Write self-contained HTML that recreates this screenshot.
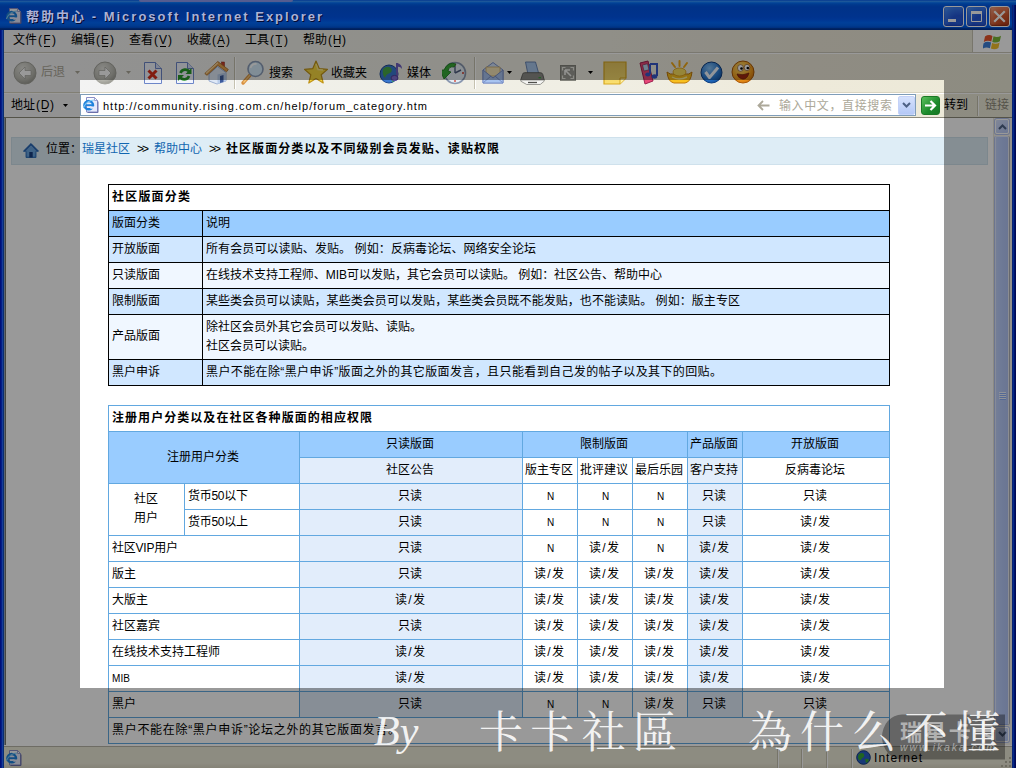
<!DOCTYPE html>
<html lang="zh-CN"><head><meta charset="utf-8"><title>帮助中心 - Microsoft Internet Explorer</title>
<style>
html,body{margin:0;padding:0}
body{width:1016px;height:768px;overflow:hidden;position:relative;background:#ece9d8;font-family:"Liberation Sans",sans-serif;font-size:12px;line-height:12px}
svg.t{display:block;overflow:visible}
svg.t text{font-family:"Liberation Sans","Noto Sans CJK SC",sans-serif;font-size:12px}
.a{position:absolute}
div.a{box-sizing:border-box}
#titlebar{left:0;top:0;width:1016px;height:30px;background:linear-gradient(to bottom,#0058ee 0%,#3593ff 4%,#288eff 6%,#127dff 8%,#036ffc 10%,#0262ee 14%,#0057e5 20%,#0054e3 24%,#0055eb 56%,#005bf5 66%,#026afe 76%,#0062ef 86%,#0052d6 92%,#0040ab 94%,#003092 100%)}
.wb{top:6px;width:21px;height:21px;border:1px solid #fff;border-radius:3px;background:radial-gradient(circle at 75% 85%,#2a5fd8 0%,#2457d8 35%,#3c7ff0 75%,#5a9cfa 100%);box-shadow:inset 0 -1px 2px #1b3fb8}
.wb.close{background:radial-gradient(circle at 80% 90%,#b8401c 0%,#d2562c 40%,#ea8460 75%,#f4ac8e 100%);box-shadow:inset 0 -1px 2px #8a2810}
#lborder{left:0;top:30px;width:4px;height:738px;background:linear-gradient(to right,#0019c8 0,#0019c8 1px,#0832e1 1px,#0832e1 2px,#2564ff 2px,#2564ff 3px,#114bbe 3px)}
#rborder{left:1012px;top:5px;width:4px;height:763px;background:linear-gradient(to right,#103abf 0,#103abf 1px,#0843e1 1px,#0843e1 2px,#0021af 2px,#0021af 3px,#00108d 3px)}
#menubar{left:4px;top:30px;width:1008px;height:23px;background:linear-gradient(to right,#f4f4f6 0,#f0f0e9 30%,#f0eee3 60%,#eeeada 80%,#ece9d8 100%);border-bottom:1px solid #cbc8bb}
#flag{left:972px;top:30px;width:39px;height:22px;background:#fff;border-left:1px solid #c8c5b5}
#toolbar{left:4px;top:53px;width:1008px;height:40px;background:linear-gradient(to right,#f4f4f6 0,#f0f0e9 30%,#f0eee3 60%,#eeeada 80%,#ece9d8 100%);border-top:1px solid #fff;border-bottom:1px solid #d8d4c2}
#addrbar{left:4px;top:93px;width:1008px;height:25px;background:linear-gradient(to right,#f4f4f6 0,#f0f0e9 30%,#f0eee3 60%,#eeeada 80%,#ece9d8 100%);border-top:1px solid #fff}
#addrbox{left:80px;top:94px;width:836px;height:22px;background:#fff;border:1px solid #7f9db9}
.sep{width:2px;border-left:1px solid #c5c2b0;border-right:1px solid #fff;height:32px}
#view{left:6px;top:118px;width:987px;height:627px;background:#fff;overflow:hidden}
#vb1{left:4px;top:117px;width:1008px;height:1px;background:#8d8a7b}
#vb2{left:4px;top:118px;width:1px;height:627px;background:#96a7be}
#vb3{left:5px;top:118px;width:1px;height:627px;background:#75756c}
#crumb{left:5px;top:19px;width:977px;height:28px;background:#deedf6;border:1px solid #cfe1ec}
#sbar{left:993px;top:118px;width:19px;height:627px;background:#f3f1ea;border-left:1px solid #e8e6dd}
#sthumb{left:995px;top:136px;width:14px;height:589px;background:linear-gradient(to right,#c2d2fb 0,#b7cbfa 45%,#b2c4f4 100%);border:1px solid #dfe8fd;border-right-color:#e8ecf4;border-bottom-color:#98aee8;border-radius:2px;box-shadow:1px 0 0 #a8acb4,-1px 0 0 #b4c4ee}
.sbtn{left:995px;width:14px;height:15px;background:linear-gradient(135deg,#d6e1fd,#b6c7f5);border:1px solid #fff;border-radius:2px;box-shadow:0 0 0 1px #b4c4ee}
#status{left:4px;top:745px;width:1008px;height:23px;background:linear-gradient(to bottom,#ece9d8 0,#ece9d8 78%,#dedac6 100%);border-top:1px solid #fff;box-shadow:inset 0 1px 0 #b7b4a7}
.ssep{top:749px;width:2px;height:19px;border-left:1px solid #c5c2b0;border-right:1px solid #fff}
table{position:absolute;border-collapse:separate;border-spacing:0;table-layout:fixed;left:102px}
td{box-sizing:border-box;height:26px;padding:6px 0 0 3px;vertical-align:top;overflow:hidden}
table.t1{top:66px;border-top:1px solid #000;border-left:1px solid #000}
table.t1 td{border-right:1px solid #000;border-bottom:1px solid #000}
table.t2{top:287px;border-top:1px solid #62a8e0;border-left:1px solid #62a8e0}
table.t2 td{border-right:1px solid #62a8e0;border-bottom:1px solid #62a8e0;background:#fff}
tr.h td,td.h{background:#9cf}
tr.d td{background:#d0e7ff}
tr.l td{background:#f0f7ff}
table.t2 td.c{background:#e2edfb}
table.t2 tr.h td{background:#9cf}
td svg.t+svg.t{margin-top:7px}
#dim{left:80px;top:80px;width:864px;height:608px;box-shadow:0 0 0 2000px rgba(0,0,0,.4)}
</style></head>
<body>
<div class="a" id="titlebar"></div>
<div class="a" id="lborder"></div><div class="a" id="rborder"></div>
<svg class="a" style="left:6px;top:8px" width="16" height="16" viewBox="0 0 16 16"><path d="M3.500 .500h8l3 3v11.500h-11z" fill="#e6eafc" stroke="#8a8ec6"/><path d="M4 1h7.500v3h-7.500z" fill="#fbfcff"/><path d="M11.500 .500v3h3z" fill="#fff" stroke="#8a8ec6" stroke-width=".800"/><path d="M4.500 15.500h10.500v-11" fill="none" stroke="#6c70aa"/><ellipse cx="5.700" cy="8.200" rx="4.300" ry="4.100" fill="none" stroke="#1f82dc" stroke-width="2.500"/><path d="M1.800 8.200h8" stroke="#1f82dc" stroke-width="1.900"/><path d="M7.300 10.600h4" stroke="#e6eafc" stroke-width="2.300"/><path d="M.300 11q3.500-8 11-8" fill="none" stroke="#7cc8f6" stroke-width="1.100"/></svg>
<div class="a" style="left:139px;top:0;width:154px;height:2px;background:#8e9af0;border-radius:0 0 5px 5px"></div>
<svg class="t a" width="296" height="13" fill="#040a32" style="left:27px;top:11px;z-index:5"><text x="0" y="11" textLength="296" style="font-size:13px;font-weight:bold">帮助中心 - Microsoft Internet Explorer</text></svg>
<svg class="t a" width="296" height="13" fill="#acb2d6" style="left:26px;top:10px;z-index:5"><text x="0" y="11" textLength="296" style="font-size:13px;font-weight:bold">帮助中心 - Microsoft Internet Explorer</text></svg>
<div class="a wb" style="left:943px"></div><div class="a wb" style="left:966px"></div><div class="a wb close" style="left:989px"></div>
<svg class="a" style="left:943px;top:6px" width="21" height="21" viewBox="0 0 21 21"><rect x="5" y="13" width="8" height="3" fill="#fff"/></svg>
<svg class="a" style="left:966px;top:6px" width="21" height="21" viewBox="0 0 21 21"><path d="M5.5 6.5h10v9h-10z" fill="none" stroke="#fff" stroke-width="1"/><rect x="5" y="5" width="11" height="3" fill="#fff"/></svg>
<svg class="a" style="left:989px;top:6px" width="21" height="21" viewBox="0 0 21 21"><path d="M6 6l9 9M15 6l-9 9" stroke="#fff" stroke-width="2.2" stroke-linecap="square"/></svg>
<div class="a" id="menubar"></div>
<svg class="t a" width="24" height="12" fill="#000" style="left:13px;top:34px;"><text x="0" y="10" textLength="24">文件</text></svg>
<svg class="t a" width="18" height="12" fill="#000" style="left:38px;top:34px;"><text x="0" y="10" textLength="18">(F)</text></svg>
<div class="a" style="left:44px;top:46px;width:6px;height:1px;background:#000"></div>
<svg class="t a" width="24" height="12" fill="#000" style="left:71px;top:34px;"><text x="0" y="10" textLength="24">编辑</text></svg>
<svg class="t a" width="18" height="12" fill="#000" style="left:96px;top:34px;"><text x="0" y="10" textLength="18">(E)</text></svg>
<div class="a" style="left:102px;top:46px;width:6px;height:1px;background:#000"></div>
<svg class="t a" width="24" height="12" fill="#000" style="left:129px;top:34px;"><text x="0" y="10" textLength="24">查看</text></svg>
<svg class="t a" width="18" height="12" fill="#000" style="left:154px;top:34px;"><text x="0" y="10" textLength="18">(V)</text></svg>
<div class="a" style="left:160px;top:46px;width:6px;height:1px;background:#000"></div>
<svg class="t a" width="24" height="12" fill="#000" style="left:187px;top:34px;"><text x="0" y="10" textLength="24">收藏</text></svg>
<svg class="t a" width="18" height="12" fill="#000" style="left:212px;top:34px;"><text x="0" y="10" textLength="18">(A)</text></svg>
<div class="a" style="left:218px;top:46px;width:6px;height:1px;background:#000"></div>
<svg class="t a" width="24" height="12" fill="#000" style="left:245px;top:34px;"><text x="0" y="10" textLength="24">工具</text></svg>
<svg class="t a" width="18" height="12" fill="#000" style="left:270px;top:34px;"><text x="0" y="10" textLength="18">(T)</text></svg>
<div class="a" style="left:276px;top:46px;width:6px;height:1px;background:#000"></div>
<svg class="t a" width="24" height="12" fill="#000" style="left:303px;top:34px;"><text x="0" y="10" textLength="24">帮助</text></svg>
<svg class="t a" width="18" height="12" fill="#000" style="left:328px;top:34px;"><text x="0" y="10" textLength="18">(H)</text></svg>
<div class="a" style="left:334px;top:46px;width:6px;height:1px;background:#000"></div>
<div class="a" id="flag"></div>
<svg class="a" style="left:983px;top:33px" width="20" height="18" viewBox="0 0 20 18"><path d="M2 3.5q3.5-2.5 7.5-.6l-1.2 5.6q-4-1.9-7.5.6z" fill="#e8542c"/><path d="M10.5 3.3q4 1.7 7.5-.6l-1.2 5.6q-3.5 2.3-7.5.6z" fill="#7cb838"/><path d="M.6 10.2q3.5-2.5 7.5-.6l-1.2 5.6q-4-1.9-7.5.6z" fill="#3c7fd8"/><path d="M9.1 10q4 1.7 7.5-.6l-1.2 5.6q-3.5 2.3-7.5.6z" fill="#f4c02c"/></svg>
<div class="a" id="toolbar"></div>
<svg class="a" style="left:13px;top:61px" width="24" height="24" viewBox="-12 -12 24 24"><defs><radialGradient id="gb25" cx=".4" cy=".3" r=".8"><stop offset="0" stop-color="#e4e4de"/><stop offset=".6" stop-color="#bdbdb5"/><stop offset="1" stop-color="#8e8e86"/></radialGradient></defs><circle r="11" fill="url(#gb25)" stroke="#a4a49c" stroke-width="1"/><path d="M-6 0l6-6v3.5h6v5h-6v3.5z" fill="#fff" stroke="#9a9a94" stroke-width=".6"/></svg>
<svg class="t a" width="24" height="12" fill="#aca899" style="left:41px;top:66px;"><text x="0" y="10" textLength="24">后退</text></svg>
<svg class="a" style="left:75px;top:71px" width="5" height="3" viewBox="0 0 5 3"><path d="M0 0h5l-2.5 3z" fill="#aca899"/></svg>
<svg class="a" style="left:93px;top:61px" width="24" height="24" viewBox="-12 -12 24 24"><defs><radialGradient id="gb105" cx=".4" cy=".3" r=".8"><stop offset="0" stop-color="#e4e4de"/><stop offset=".6" stop-color="#bdbdb5"/><stop offset="1" stop-color="#8e8e86"/></radialGradient></defs><circle r="11" fill="url(#gb105)" stroke="#a4a49c" stroke-width="1"/><g transform="scale(-1,1)"><path d="M-6 0l6-6v3.5h6v5h-6v3.5z" fill="#fff" stroke="#9a9a94" stroke-width=".6"/></g></svg>
<svg class="a" style="left:126px;top:71px" width="5" height="3" viewBox="0 0 5 3"><path d="M0 0h5l-2.5 3z" fill="#aca899"/></svg>
<svg class="a" style="left:143px;top:61px" width="20" height="24" viewBox="0 0 20 24"><path d="M1.5 1.5h11l6 6v15h-17z" fill="#f2f5fd" stroke="#6d86c8"/><path d="M12.5 1.5v6h6" fill="#d4dcf4" stroke="#6d86c8"/><path d="M5.5 9.5l8 8M13.5 9.5l-8 8" stroke="#d8301c" stroke-width="3"/></svg>
<svg class="a" style="left:175px;top:61px" width="20" height="24" viewBox="0 0 20 24"><path d="M1.5 1.5h11l6 6v15h-17z" fill="#f2f5fd" stroke="#6d86c8"/><path d="M12.5 1.5v6h6" fill="#d4dcf4" stroke="#6d86c8"/><path d="M14.5 11a5 5 0 0 0-9 1" fill="none" stroke="#2a9a2a" stroke-width="2.6"/><path d="M16.5 7v6h-6z" fill="#2a9a2a"/><path d="M5 16a5 5 0 0 0 9-1" fill="none" stroke="#2a9a2a" stroke-width="2.6"/><path d="M3 20v-6h6z" fill="#2a9a2a"/></svg>
<svg class="a" style="left:204px;top:60px" width="25" height="25" viewBox="0 0 25 25"><path d="M5 14l8.500-7.500l8.500 6v8.500l-9 3l-8-3z" fill="#dfe9f7" stroke="#8aa0c8" stroke-width=".800"/><path d="M13.500 24v-9.500l8.500-2v8.500z" fill="#b9cdea"/><path d="M16 23v-7l3.500-1v7z" fill="#3c5a9c"/><rect x="17.500" y="2" width="3" height="5" fill="#c8402c" stroke="#8a2818" stroke-width=".500"/><path d="M.800 13.500l13-12l10.500 8l-1.800 2.300l-8.700-6.500l-10.800 10z" fill="#e6a24e" stroke="#a86a24" stroke-width=".800"/><path d="M2 13.500l11.800-10.700" stroke="#f8d9a0" stroke-width="1.200"/></svg>
<div class="a sep" style="left:234px;top:57px"></div>
<svg class="a" style="left:240px;top:60px" width="25" height="26" viewBox="0 0 25 26"><path d="M3 23l8-9" stroke="#d89040" stroke-width="3.4" stroke-linecap="round"/><path d="M3.500 22.500l7-8" stroke="#f4c878" stroke-width="1.200"/><circle cx="15.500" cy="9" r="7.500" fill="#d6ecfa" stroke="#8a9cb8" stroke-width="1.600"/><path d="M10.500 8a5 5 0 0 1 6-4" fill="none" stroke="#fff" stroke-width="1.800"/></svg>
<svg class="t a" width="24" height="12" fill="#000" style="left:269px;top:67px;"><text x="0" y="10" textLength="24">搜索</text></svg>
<svg class="a" style="left:304px;top:60px" width="24" height="24" viewBox="0 0 24 24"><path d="M12 1l3.300 7.700 8.200.700-6.300 5.400 2 8.200-7.200-4.400-7.200 4.400 2-8.200-6.300-5.400 8.200-.700z" fill="#f9d940" stroke="#c09418" stroke-width="1.200" stroke-linejoin="round"/><path d="M12 4l2 5.500 5 .5" fill="none" stroke="#fbe88a" stroke-width="1.400"/></svg>
<svg class="t a" width="36" height="12" fill="#000" style="left:331px;top:67px;"><text x="0" y="10" textLength="36">收藏夹</text></svg>
<svg class="a" style="left:379px;top:60px" width="25" height="25" viewBox="0 0 25 25"><circle cx="10" cy="14" r="9" fill="#3a78d0" stroke="#1c4890"/><path d="M4 9q4-4 8-1q2 3-1 5q-4 1-5 5q-3-3-2-9z" fill="#48a848"/><path d="M12 17q3-2 6 0q-1 4-5 5z" fill="#48a848"/><path d="M18 3v14" stroke="#7060c0" stroke-width="2"/><path d="M18 3q5 1 5 6q-2-3-5-2z" fill="#7060c0"/><ellipse cx="15.500" cy="18" rx="3.500" ry="2.600" fill="#8070d0" stroke="#5040a0"/></svg>
<svg class="t a" width="24" height="12" fill="#000" style="left:407px;top:67px;"><text x="0" y="10" textLength="24">媒体</text></svg>
<svg class="a" style="left:442px;top:60px" width="25" height="25" viewBox="0 0 25 25"><circle cx="13" cy="13" r="10.500" fill="#e6eef6" stroke="#8a98b0" stroke-width="1.600"/><path d="M13 13v-7M13 13l6-3" stroke="#506080" stroke-width="1.400"/><path d="M13 4v2M13 20v2M4 13h2M20 13h2" stroke="#d04030" stroke-width="1.300"/><path d="M2 10q4-9 12-6l-2 3q-5-1-6 4l3 1l-7 7l-4-9z" fill="#38a838" stroke="#1c781c" stroke-width=".8"/></svg>
<div class="a sep" style="left:474px;top:57px"></div>
<svg class="a" style="left:481px;top:61px" width="24" height="24" viewBox="0 0 24 24"><path d="M2 9l10-7.500l10 7.500v13h-20z" fill="#cfe0f8" stroke="#7a90c8"/><path d="M5 6h14v9h-14z" fill="#f6e4b8" stroke="#c8a868" stroke-width=".8"/><path d="M2 9l10 8l10-8v13h-20z" fill="#a8c4f0" stroke="#7a90c8"/><path d="M2 22l8-7M22 22l-8-7" stroke="#7a90c8" fill="none"/></svg>
<svg class="a" style="left:507px;top:71px" width="5" height="3" viewBox="0 0 5 3"><path d="M0 0h5l-2.500 3z" fill="#000"/></svg>
<svg class="a" style="left:520px;top:61px" width="25" height="24" viewBox="0 0 25 24"><path d="M5.500 1h10l3.500 12.500h-11z" fill="#a9c6ec" stroke="#5f7cac" stroke-width=".900"/><path d="M2.500 13.500q.200-1.800 2.200-1.800h15.600q2 0 2.500 1.800l1.400 5.500h-23.400z" fill="#8c8c88" stroke="#5a5a56" stroke-width=".900"/><path d="M.800 19h23.400v1.200l-4 3.300h-13.500l-5.900-3.300z" fill="#f4f4f2" stroke="#8e8e8a" stroke-width=".900"/><path d="M8 21.500h9" stroke="#50504c" stroke-width="1.300"/><rect x="18.500" y="16" width="2.500" height="1.300" fill="#40a040"/></svg>
<svg class="a" style="left:560px;top:65px" width="16" height="16" viewBox="0 0 16 16"><rect x=".500" y=".500" width="15" height="15" fill="#9c9c94" stroke="#84847c"/><path d="M2.500 5.500v-3h3M10.500 2.500h3v3M13.500 10.500v3h-3M5.500 13.500h-3v-3" fill="none" stroke="#e8e8e0" stroke-width="1.200"/><path d="M5 5h5M5 5v5M5 5l6 6" stroke="#f4f4f0" stroke-width="1.600" fill="none"/></svg>
<svg class="a" style="left:588px;top:71px" width="5" height="3" viewBox="0 0 5 3"><path d="M0 0h5l-2.500 3z" fill="#000"/></svg>
<svg class="a" style="left:603px;top:61px" width="24" height="24" viewBox="0 0 24 24"><defs><linearGradient id="ng" x1="0" y1="0" x2="0" y2="1"><stop offset="0" stop-color="#e8c860"/><stop offset="1" stop-color="#fbe070"/></linearGradient></defs><path d="M1 1h22v16l-6 6h-16z" fill="url(#ng)" stroke="#d8a820" stroke-width="1.200"/><path d="M23 17h-6v6" fill="#fdf0a8" stroke="#d8a820"/></svg>
<svg class="a" style="left:636px;top:60px" width="22" height="26" viewBox="0 0 22 26"><path d="M4 3l8-2l5 20l-8 3z" fill="#e84878" stroke="#a02050"/><path d="M6.500 5l5-1.200l1.500 6l-5 1.200z" fill="#b8d8f0" stroke="#80264c" stroke-width=".600"/><path d="M14 4h7v12" fill="none" stroke="#3858c8" stroke-width="2"/><ellipse cx="18.500" cy="16.500" rx="2.800" ry="2.200" fill="#3858c8"/><path d="M14 4v10" stroke="#3858c8" stroke-width="2"/><ellipse cx="11.800" cy="14.500" rx="2.600" ry="2" fill="#3858c8"/></svg>
<svg class="a" style="left:666px;top:59px" width="27" height="27" viewBox="0 0 27 27"><path d="M1 13q3 3 7 2q5.500-4 11 0q4 1 7-2q-1 10-7 11h-11q-6-1-7-11z" fill="#f8c020" stroke="#c07808"/><ellipse cx="13.500" cy="13" rx="6.500" ry="4" fill="#fbe060" stroke="#d89818" stroke-width=".800"/><path d="M13.500 2v5M6 4l3 4M21 4l-3 4" stroke="#f0a818" stroke-width="2" stroke-linecap="round"/><path d="M6 18q7 4 15 0" fill="none" stroke="#fdf0a0" stroke-width="1.400"/></svg>
<svg class="a" style="left:700px;top:61px" width="23" height="23" viewBox="0 0 23 23"><defs><radialGradient id="bc" cx=".4" cy=".3" r=".8"><stop offset="0" stop-color="#8ac4f8"/><stop offset=".6" stop-color="#2878d0"/><stop offset="1" stop-color="#104890"/></radialGradient></defs><circle cx="11.500" cy="11.500" r="10.500" fill="url(#bc)" stroke="#0c3c80"/><path d="M5.500 11l4 5.500l8.500-10" fill="none" stroke="#f4f8ff" stroke-width="3" stroke-linejoin="round"/></svg>
<svg class="a" style="left:731px;top:60px" width="24" height="24" viewBox="0 0 24 24"><defs><radialGradient id="sm" cx=".4" cy=".3" r=".8"><stop offset="0" stop-color="#fde070"/><stop offset=".6" stop-color="#f4a020"/><stop offset="1" stop-color="#c86808"/></radialGradient></defs><circle cx="12" cy="12" r="11" fill="url(#sm)" stroke="#a85808"/><ellipse cx="9.500" cy="8" rx="3" ry="3.400" fill="#fff" stroke="#804008" stroke-width=".600"/><ellipse cx="16" cy="7.500" rx="2.800" ry="3.200" fill="#fff" stroke="#804008" stroke-width=".600"/><circle cx="10.500" cy="8.500" r="1.300"/><circle cx="16.800" cy="8" r="1.300"/><path d="M6 14q6 2 12-1q-2 7-7 6q-4-1-5-5z" fill="#a02810" stroke="#702008" stroke-width=".700"/></svg>
<div class="a" id="addrbar"></div>
<svg class="t a" width="24" height="12" fill="#000" style="left:11px;top:99px;"><text x="0" y="10" textLength="24">地址</text></svg>
<svg class="t a" width="18" height="12" fill="#000" style="left:36px;top:99px;"><text x="0" y="10" textLength="18">(D)</text></svg>
<div class="a" style="left:42px;top:111px;width:6px;height:1px;background:#000"></div>
<svg class="a" style="left:63px;top:104px" width="5" height="3" viewBox="0 0 5 3"><path d="M0 0h5l-2.500 3z" fill="#000"/></svg>
<div class="a" id="addrbox"></div>
<svg class="a" style="left:83px;top:97px" width="16" height="16" viewBox="0 0 16 16"><path d="M3.500 .500h8l3 3v11.500h-11z" fill="#e6eafc" stroke="#8a8ec6"/><path d="M4 1h7.500v3h-7.500z" fill="#fbfcff"/><path d="M11.500 .500v3h3z" fill="#fff" stroke="#8a8ec6" stroke-width=".800"/><path d="M4.500 15.500h10.500v-11" fill="none" stroke="#6c70aa"/><ellipse cx="5.700" cy="8.200" rx="4.300" ry="4.100" fill="none" stroke="#1f82dc" stroke-width="2.500"/><path d="M1.800 8.200h8" stroke="#1f82dc" stroke-width="1.900"/><path d="M7.300 10.600h4" stroke="#e6eafc" stroke-width="2.300"/><path d="M.300 11q3.500-8 11-8" fill="none" stroke="#7cc8f6" stroke-width="1.100"/></svg>
<svg class="t a" width="324" height="12" fill="#000" style="left:103px;top:100px;"><text x="0" y="10" textLength="324" style="font-size:11px">http://community.rising.com.cn/help/forum_category.htm</text></svg>
<svg class="a" style="left:757px;top:100px" width="13" height="11" viewBox="0 0 13 11"><path d="M6 1l-4.500 4.500l4.500 4.500M1.500 5.500h11" fill="none" stroke="#aca899" stroke-width="1.800"/></svg>
<svg class="t a" width="113" height="12" fill="#aca899" style="left:779px;top:100px;"><text x="0" y="10" textLength="113">输入中文，直接搜索</text></svg>
<div class="a" style="left:898px;top:96px;width:17px;height:19px;background:linear-gradient(to bottom,#d6e2fd,#b4c8f6);border:1px solid #c4d2f8;border-radius:2px"></div>
<svg class="a" style="left:902px;top:102px" width="9" height="7" viewBox="0 0 9 7"><path d="M1 1l3.500 3.500l3.500-3.500" fill="none" stroke="#4d6185" stroke-width="2"/></svg>
<div class="a" style="left:921px;top:96px;width:19px;height:19px;background:linear-gradient(135deg,#5cc05c,#1c8a2c 60%,#167824);border:1px solid #1a7a26;border-radius:3px"></div>
<svg class="a" style="left:924px;top:99px" width="13" height="13" viewBox="0 0 13 13"><path d="M1 6.500h10M6.500 2l4.500 4.500l-4.500 4.500" fill="none" stroke="#fff" stroke-width="2.200"/></svg>
<svg class="t a" width="24" height="12" fill="#000" style="left:944px;top:99px;"><text x="0" y="10" textLength="24">转到</text></svg>
<div class="a sep" style="left:977px;top:96px;height:20px"></div>
<svg class="t a" width="24" height="12" fill="#8c897a" style="left:985px;top:99px;"><text x="0" y="10" textLength="24">链接</text></svg>
<div class="a" id="vb1"></div><div class="a" id="vb2"></div><div class="a" id="vb3"></div>
<div class="a" id="sbar"></div><div class="a" id="sthumb"></div>
<div class="a sbtn" style="top:119px"></div><div class="a sbtn" style="top:727px"></div>
<svg class="a" style="left:998px;top:123px" width="9" height="7" viewBox="0 0 9 7"><path d="M1 6l3.500-3.500l3.500 3.500" fill="none" stroke="#4d6185" stroke-width="2"/></svg>
<svg class="a" style="left:998px;top:731px" width="9" height="7" viewBox="0 0 9 7"><path d="M1 1l3.500 3.500l3.500-3.500" fill="none" stroke="#4d6185" stroke-width="2"/></svg>
<svg class="a" style="left:999px;top:392px" width="7" height="8" viewBox="0 0 7 8"><path d="M0 .500h7M0 2.500h7M0 4.500h7M0 6.500h7" stroke="#eef4fe"/><path d="M1 1.500h7M1 3.500h7M1 5.500h7M1 7.500h7" stroke="#8cb0f8"/></svg>
<div class="a" id="status"></div>
<svg class="a" style="left:6px;top:750px" width="16" height="16" viewBox="0 0 16 16"><path d="M3.500 .500h8l3 3v11.500h-11z" fill="#e6eafc" stroke="#8a8ec6"/><path d="M4 1h7.500v3h-7.500z" fill="#fbfcff"/><path d="M11.500 .500v3h3z" fill="#fff" stroke="#8a8ec6" stroke-width=".800"/><path d="M4.500 15.500h10.500v-11" fill="none" stroke="#6c70aa"/><ellipse cx="5.700" cy="8.200" rx="4.300" ry="4.100" fill="none" stroke="#1f82dc" stroke-width="2.500"/><path d="M1.800 8.200h8" stroke="#1f82dc" stroke-width="1.900"/><path d="M7.300 10.600h4" stroke="#e6eafc" stroke-width="2.300"/><path d="M.300 11q3.500-8 11-8" fill="none" stroke="#7cc8f6" stroke-width="1.100"/></svg>
<div class="a ssep" style="left:777px"></div>
<div class="a ssep" style="left:801px"></div>
<div class="a ssep" style="left:826px"></div>
<div class="a ssep" style="left:851px"></div>
<svg class="a" style="left:856px;top:750px" width="15" height="15" viewBox="0 0 15 15"><circle cx="7.500" cy="7.500" r="6.800" fill="#2860c8" stroke="#103880"/><path d="M3 4q3-2 5 0q1 3-2 4q-1 3-3 2q-2-3 0-6zM9 9q3-1 4 1q-1 3-3 3z" fill="#38a838"/></svg>
<svg class="t a" width="48" height="12" fill="#000" style="left:874px;top:752px;"><text x="0" y="10" textLength="48">Internet</text></svg>
<svg class="a" style="left:999px;top:755px" width="12" height="12" viewBox="0 0 12 12"><path d="M10 2h2v2h-2zM6 6h2v2h-2zM10 6h2v2h-2zM2 10h2v2h-2zM6 10h2v2h-2zM10 10h2v2h-2z" fill="#b8b4a2"/></svg>
<div class="a" id="view"><div class="a" id="crumb"></div>
<svg class="a" style="left:17px;top:25px" width="16" height="15" viewBox="0 0 16 15"><defs><linearGradient id="hg" x1="0" y1="0" x2="0" y2="1"><stop offset="0" stop-color="#8fc0ee"/><stop offset="1" stop-color="#3f7fc8"/></linearGradient></defs><path d="M8 .600l7.600 7.600h-2.600v6.300h-10v-6.300h-2.600z" fill="url(#hg)" stroke="#2f6fb8" stroke-width=".900"/><path d="M8 3.400l3.800 3.800v6.300h-7.600v-6.300z" fill="#6aa6e0"/><rect x="6.300" y="9" width="3.400" height="5.500" fill="#163f80"/><path d="M1.200 8.200l6.800-6.800l6.800 6.800" fill="none" stroke="#2a66b4" stroke-width="1.500"/></svg>
<svg class="t a" width="36" height="12" fill="#000" style="left:40px;top:25px"><text x="0" y="10" textLength="36">位置：</text></svg>
<svg class="t a" width="48" height="12" fill="#1166b0" style="left:76px;top:25px"><text x="0" y="10" textLength="48">瑞星社区</text></svg>
<svg class="t a" width="12" height="12" fill="#000" style="left:131px;top:25px"><text x="0" y="10" textLength="12">&gt;&gt;</text></svg>
<svg class="t a" width="48" height="12" fill="#1166b0" style="left:148px;top:25px"><text x="0" y="10" textLength="48">帮助中心</text></svg>
<svg class="t a" width="12" height="12" fill="#000" style="left:203px;top:25px"><text x="0" y="10" textLength="12">&gt;&gt;</text></svg>
<svg class="t a" width="273" height="12" fill="#000" style="left:220px;top:25px"><text x="0" y="10" textLength="273" font-weight="bold">社区版面分类以及不同级别会员发贴、读贴权限</text></svg>
<table class="t1"><colgroup><col style="width:94px"><col style="width:687px"></colgroup><tr><td colspan="2" style="background:#fff"><svg class="t " width="78" height="12" fill="#000"><text x="0" y="10" textLength="78" font-weight="bold">社区版面分类</text></svg></td></tr><tr class="h"><td><svg class="t " width="48" height="12" fill="#000"><text x="0" y="10" textLength="48">版面分类</text></svg></td><td><svg class="t " width="24" height="12" fill="#000"><text x="0" y="10" textLength="24">说明</text></svg></td></tr><tr class="d"><td><svg class="t " width="48" height="12" fill="#000"><text x="0" y="10" textLength="48">开放版面</text></svg></td><td><svg class="t " width="330" height="12" fill="#000"><text x="0" y="10" textLength="330" xml:space="preserve">所有会员可以读贴、发贴。 例如：反病毒论坛、网络安全论坛</text></svg></td></tr><tr class="l"><td><svg class="t " width="48" height="12" fill="#000"><text x="0" y="10" textLength="48">只读版面</text></svg></td><td><svg class="t " width="456" height="12" fill="#000"><text x="0" y="10" textLength="456" xml:space="preserve">在线技术支持工程师、MIB可以发贴，其它会员可以读贴。 例如：社区公告、帮助中心</text></svg></td></tr><tr class="d"><td><svg class="t " width="48" height="12" fill="#000"><text x="0" y="10" textLength="48">限制版面</text></svg></td><td><svg class="t " width="534" height="12" fill="#000"><text x="0" y="10" textLength="534" xml:space="preserve">某些类会员可以读贴，某些类会员可以发贴，某些类会员既不能发贴，也不能读贴。 例如：版主专区</text></svg></td></tr><tr class="l"><td style="height:45px;padding-top:15px"><svg class="t " width="48" height="12" fill="#000"><text x="0" y="10" textLength="48">产品版面</text></svg></td><td style="height:45px"><svg class="t " width="216" height="12" fill="#000"><text x="0" y="10" textLength="216">除社区会员外其它会员可以发贴、读贴。</text></svg><svg class="t " width="108" height="12" fill="#000"><text x="0" y="10" textLength="108">社区会员可以读贴。</text></svg></td></tr><tr class="d"><td><svg class="t " width="48" height="12" fill="#000"><text x="0" y="10" textLength="48">黑户申诉</text></svg></td><td><svg class="t " width="516" height="12" fill="#000"><text x="0" y="10" textLength="516">黑户不能在除“黑户申诉”版面之外的其它版面发言，且只能看到自己发的帖子以及其下的回贴。</text></svg></td></tr></table>
<table class="t2"><colgroup><col style="width:76px"><col style="width:115px"><col style="width:223px"><col style="width:55px"><col style="width:55px"><col style="width:55px"><col style="width:55px"><col style="width:147px"></colgroup><tr><td colspan="8"><svg class="t " width="260" height="12" fill="#000"><text x="0" y="10" textLength="260" font-weight="bold">注册用户分类以及在社区各种版面的相应权限</text></svg></td></tr><tr class="h"><td colspan="2" rowspan="2" style="padding-left:0;height:52px;padding-top:19px"><svg class="t " width="72" height="12" fill="#000" style="margin-left:58px"><text x="0" y="10" textLength="72">注册用户分类</text></svg></td><td style="padding-left:0;"><svg class="t " width="48" height="12" fill="#000" style="margin-left:86px"><text x="0" y="10" textLength="48">只读版面</text></svg></td><td colspan="3" style="padding-left:0;"><svg class="t " width="48" height="12" fill="#000" style="margin-left:57px"><text x="0" y="10" textLength="48">限制版面</text></svg></td><td style="padding-left:0;"><svg class="t " width="48" height="12" fill="#000" style="margin-left:2px"><text x="0" y="10" textLength="48">产品版面</text></svg></td><td style="padding-left:0;"><svg class="t " width="48" height="12" fill="#000" style="margin-left:48px"><text x="0" y="10" textLength="48">开放版面</text></svg></td></tr><tr><td class="c" style="padding-left:0;"><svg class="t " width="48" height="12" fill="#000" style="margin-left:86px"><text x="0" y="10" textLength="48">社区公告</text></svg></td><td style="padding-left:0;"><svg class="t " width="48" height="12" fill="#000" style="margin-left:2px"><text x="0" y="10" textLength="48">版主专区</text></svg></td><td style="padding-left:0;"><svg class="t " width="48" height="12" fill="#000" style="margin-left:2px"><text x="0" y="10" textLength="48">批评建议</text></svg></td><td style="padding-left:0;"><svg class="t " width="48" height="12" fill="#000" style="margin-left:2px"><text x="0" y="10" textLength="48">最后乐园</text></svg></td><td class="c" style="padding-left:0;"><svg class="t " width="48" height="12" fill="#000" style="margin-left:2px"><text x="0" y="10" textLength="48">客户支持</text></svg></td><td style="padding-left:0;"><svg class="t " width="60" height="12" fill="#000" style="margin-left:42px"><text x="0" y="10" textLength="60">反病毒论坛</text></svg></td></tr><tr><td rowspan="2" style="padding-left:0;height:52px;padding-top:9px"><svg class="t " width="24" height="12" fill="#000" style="margin-left:25px"><text x="0" y="10" textLength="24">社区</text></svg><svg class="t " width="24" height="12" fill="#000" style="margin-left:25px"><text x="0" y="10" textLength="24">用户</text></svg></td><td><svg class="t " width="60" height="12" fill="#000"><text x="0" y="10" textLength="60">货币50以下</text></svg></td><td class="c" style="padding-left:0;"><svg class="t " width="24" height="12" fill="#000" style="margin-left:98px"><text x="0" y="10" textLength="24">只读</text></svg></td><td style="padding-left:0;"><svg class="t " width="6" height="12" fill="#000" style="margin-left:24px"><text x="0" y="10" style="font-size:10px">N</text></svg></td><td style="padding-left:0;"><svg class="t " width="6" height="12" fill="#000" style="margin-left:24px"><text x="0" y="10" style="font-size:10px">N</text></svg></td><td style="padding-left:0;"><svg class="t " width="6" height="12" fill="#000" style="margin-left:24px"><text x="0" y="10" style="font-size:10px">N</text></svg></td><td class="c" style="padding-left:0;"><svg class="t " width="24" height="12" fill="#000" style="margin-left:14px"><text x="0" y="10" textLength="24">只读</text></svg></td><td style="padding-left:0;"><svg class="t " width="24" height="12" fill="#000" style="margin-left:60px"><text x="0" y="10" textLength="24">只读</text></svg></td></tr><tr><td><svg class="t " width="60" height="12" fill="#000"><text x="0" y="10" textLength="60">货币50以上</text></svg></td><td class="c" style="padding-left:0;"><svg class="t " width="24" height="12" fill="#000" style="margin-left:98px"><text x="0" y="10" textLength="24">只读</text></svg></td><td style="padding-left:0;"><svg class="t " width="6" height="12" fill="#000" style="margin-left:24px"><text x="0" y="10" style="font-size:10px">N</text></svg></td><td style="padding-left:0;"><svg class="t " width="6" height="12" fill="#000" style="margin-left:24px"><text x="0" y="10" style="font-size:10px">N</text></svg></td><td style="padding-left:0;"><svg class="t " width="6" height="12" fill="#000" style="margin-left:24px"><text x="0" y="10" style="font-size:10px">N</text></svg></td><td class="c" style="padding-left:0;"><svg class="t " width="24" height="12" fill="#000" style="margin-left:14px"><text x="0" y="10" textLength="24">只读</text></svg></td><td style="padding-left:0;"><svg class="t " width="30" height="12" fill="#000" style="margin-left:57px"><text x="0" y="10" textLength="30">读/发</text></svg></td></tr><tr><td colspan="2"><svg class="t " width="66" height="12" fill="#000"><text x="0" y="10" textLength="66">社区VIP用户</text></svg></td><td class="c" style="padding-left:0;"><svg class="t " width="24" height="12" fill="#000" style="margin-left:98px"><text x="0" y="10" textLength="24">只读</text></svg></td><td style="padding-left:0;"><svg class="t " width="6" height="12" fill="#000" style="margin-left:24px"><text x="0" y="10" style="font-size:10px">N</text></svg></td><td style="padding-left:0;"><svg class="t " width="30" height="12" fill="#000" style="margin-left:11px"><text x="0" y="10" textLength="30">读/发</text></svg></td><td style="padding-left:0;"><svg class="t " width="6" height="12" fill="#000" style="margin-left:24px"><text x="0" y="10" style="font-size:10px">N</text></svg></td><td class="c" style="padding-left:0;"><svg class="t " width="30" height="12" fill="#000" style="margin-left:11px"><text x="0" y="10" textLength="30">读/发</text></svg></td><td style="padding-left:0;"><svg class="t " width="30" height="12" fill="#000" style="margin-left:57px"><text x="0" y="10" textLength="30">读/发</text></svg></td></tr><tr><td colspan="2"><svg class="t " width="24" height="12" fill="#000"><text x="0" y="10" textLength="24">版主</text></svg></td><td class="c" style="padding-left:0;"><svg class="t " width="24" height="12" fill="#000" style="margin-left:98px"><text x="0" y="10" textLength="24">只读</text></svg></td><td style="padding-left:0;"><svg class="t " width="30" height="12" fill="#000" style="margin-left:11px"><text x="0" y="10" textLength="30">读/发</text></svg></td><td style="padding-left:0;"><svg class="t " width="30" height="12" fill="#000" style="margin-left:11px"><text x="0" y="10" textLength="30">读/发</text></svg></td><td style="padding-left:0;"><svg class="t " width="30" height="12" fill="#000" style="margin-left:11px"><text x="0" y="10" textLength="30">读/发</text></svg></td><td class="c" style="padding-left:0;"><svg class="t " width="30" height="12" fill="#000" style="margin-left:11px"><text x="0" y="10" textLength="30">读/发</text></svg></td><td style="padding-left:0;"><svg class="t " width="30" height="12" fill="#000" style="margin-left:57px"><text x="0" y="10" textLength="30">读/发</text></svg></td></tr><tr><td colspan="2"><svg class="t " width="36" height="12" fill="#000"><text x="0" y="10" textLength="36">大版主</text></svg></td><td class="c" style="padding-left:0;"><svg class="t " width="30" height="12" fill="#000" style="margin-left:95px"><text x="0" y="10" textLength="30">读/发</text></svg></td><td style="padding-left:0;"><svg class="t " width="30" height="12" fill="#000" style="margin-left:11px"><text x="0" y="10" textLength="30">读/发</text></svg></td><td style="padding-left:0;"><svg class="t " width="30" height="12" fill="#000" style="margin-left:11px"><text x="0" y="10" textLength="30">读/发</text></svg></td><td style="padding-left:0;"><svg class="t " width="30" height="12" fill="#000" style="margin-left:11px"><text x="0" y="10" textLength="30">读/发</text></svg></td><td class="c" style="padding-left:0;"><svg class="t " width="30" height="12" fill="#000" style="margin-left:11px"><text x="0" y="10" textLength="30">读/发</text></svg></td><td style="padding-left:0;"><svg class="t " width="30" height="12" fill="#000" style="margin-left:57px"><text x="0" y="10" textLength="30">读/发</text></svg></td></tr><tr><td colspan="2"><svg class="t " width="48" height="12" fill="#000"><text x="0" y="10" textLength="48">社区嘉宾</text></svg></td><td class="c" style="padding-left:0;"><svg class="t " width="24" height="12" fill="#000" style="margin-left:98px"><text x="0" y="10" textLength="24">只读</text></svg></td><td style="padding-left:0;"><svg class="t " width="30" height="12" fill="#000" style="margin-left:11px"><text x="0" y="10" textLength="30">读/发</text></svg></td><td style="padding-left:0;"><svg class="t " width="30" height="12" fill="#000" style="margin-left:11px"><text x="0" y="10" textLength="30">读/发</text></svg></td><td style="padding-left:0;"><svg class="t " width="30" height="12" fill="#000" style="margin-left:11px"><text x="0" y="10" textLength="30">读/发</text></svg></td><td class="c" style="padding-left:0;"><svg class="t " width="30" height="12" fill="#000" style="margin-left:11px"><text x="0" y="10" textLength="30">读/发</text></svg></td><td style="padding-left:0;"><svg class="t " width="30" height="12" fill="#000" style="margin-left:57px"><text x="0" y="10" textLength="30">读/发</text></svg></td></tr><tr><td colspan="2"><svg class="t " width="108" height="12" fill="#000"><text x="0" y="10" textLength="108">在线技术支持工程师</text></svg></td><td class="c" style="padding-left:0;"><svg class="t " width="30" height="12" fill="#000" style="margin-left:95px"><text x="0" y="10" textLength="30">读/发</text></svg></td><td style="padding-left:0;"><svg class="t " width="30" height="12" fill="#000" style="margin-left:11px"><text x="0" y="10" textLength="30">读/发</text></svg></td><td style="padding-left:0;"><svg class="t " width="30" height="12" fill="#000" style="margin-left:11px"><text x="0" y="10" textLength="30">读/发</text></svg></td><td style="padding-left:0;"><svg class="t " width="30" height="12" fill="#000" style="margin-left:11px"><text x="0" y="10" textLength="30">读/发</text></svg></td><td class="c" style="padding-left:0;"><svg class="t " width="30" height="12" fill="#000" style="margin-left:11px"><text x="0" y="10" textLength="30">读/发</text></svg></td><td style="padding-left:0;"><svg class="t " width="30" height="12" fill="#000" style="margin-left:57px"><text x="0" y="10" textLength="30">读/发</text></svg></td></tr><tr><td colspan="2"><svg class="t " width="18" height="12" fill="#000"><text x="0" y="10" textLength="18" style="font-size:10px">MIB</text></svg></td><td class="c" style="padding-left:0;"><svg class="t " width="30" height="12" fill="#000" style="margin-left:95px"><text x="0" y="10" textLength="30">读/发</text></svg></td><td style="padding-left:0;"><svg class="t " width="30" height="12" fill="#000" style="margin-left:11px"><text x="0" y="10" textLength="30">读/发</text></svg></td><td style="padding-left:0;"><svg class="t " width="30" height="12" fill="#000" style="margin-left:11px"><text x="0" y="10" textLength="30">读/发</text></svg></td><td style="padding-left:0;"><svg class="t " width="30" height="12" fill="#000" style="margin-left:11px"><text x="0" y="10" textLength="30">读/发</text></svg></td><td class="c" style="padding-left:0;"><svg class="t " width="30" height="12" fill="#000" style="margin-left:11px"><text x="0" y="10" textLength="30">读/发</text></svg></td><td style="padding-left:0;"><svg class="t " width="30" height="12" fill="#000" style="margin-left:57px"><text x="0" y="10" textLength="30">读/发</text></svg></td></tr><tr><td colspan="2"><svg class="t " width="24" height="12" fill="#000"><text x="0" y="10" textLength="24">黑户</text></svg></td><td class="c" style="padding-left:0;"><svg class="t " width="24" height="12" fill="#000" style="margin-left:98px"><text x="0" y="10" textLength="24">只读</text></svg></td><td style="padding-left:0;"><svg class="t " width="6" height="12" fill="#000" style="margin-left:24px"><text x="0" y="10" style="font-size:10px">N</text></svg></td><td style="padding-left:0;"><svg class="t " width="6" height="12" fill="#000" style="margin-left:24px"><text x="0" y="10" style="font-size:10px">N</text></svg></td><td style="padding-left:0;"><svg class="t " width="30" height="12" fill="#000" style="margin-left:11px"><text x="0" y="10" textLength="30">读/发</text></svg></td><td class="c" style="padding-left:0;"><svg class="t " width="24" height="12" fill="#000" style="margin-left:14px"><text x="0" y="10" textLength="24">只读</text></svg></td><td style="padding-left:0;"><svg class="t " width="24" height="12" fill="#000" style="margin-left:60px"><text x="0" y="10" textLength="24">只读</text></svg></td></tr><tr><td colspan="8"><svg class="t " width="288" height="12" fill="#000"><text x="0" y="10" textLength="288">黑户不能在除“黑户申诉”论坛之外的其它版面发言。</text></svg></td></tr></table></div>
<div class="a" id="dim"></div>
<svg class="a" style="left:0;top:0" width="1016" height="768" viewBox="0 0 1016 768"><path d="M902 714.500h103v45h-103a20 22.500 0 0 1 0-45z" fill="#000" fill-opacity=".34"/><text x="900" y="740" textLength="95" font-size="22" font-weight="bold" fill="#e4e4e4" fill-opacity=".62" style="font-family:'Liberation Sans','Noto Sans CJK SC',sans-serif">瑞星卡卡</text><text x="900" y="751" textLength="95" font-size="10.500" font-style="italic" fill="#e8e8e8" fill-opacity=".55" style="font-family:'Liberation Sans',sans-serif">www.ikaka.com</text></svg>
<svg class="a" style="left:0;top:0" width="1016" height="768" viewBox="0 0 1016 768"><g fill="#fff" fill-opacity=".9"><text x="374" y="745" font-size="42" font-style="italic" style="font-family:'Liberation Serif',serif">By</text><text x="479" y="748" textLength="198" font-size="44" style="font-family:'Liberation Serif','Noto Serif CJK SC','Noto Sans CJK TC',serif">卡卡社區</text><text x="748" y="748" textLength="252" font-size="44" style="font-family:'Liberation Serif','Noto Serif CJK SC','Noto Sans CJK TC',serif">為什么不懂</text></g></svg>
</body></html>
